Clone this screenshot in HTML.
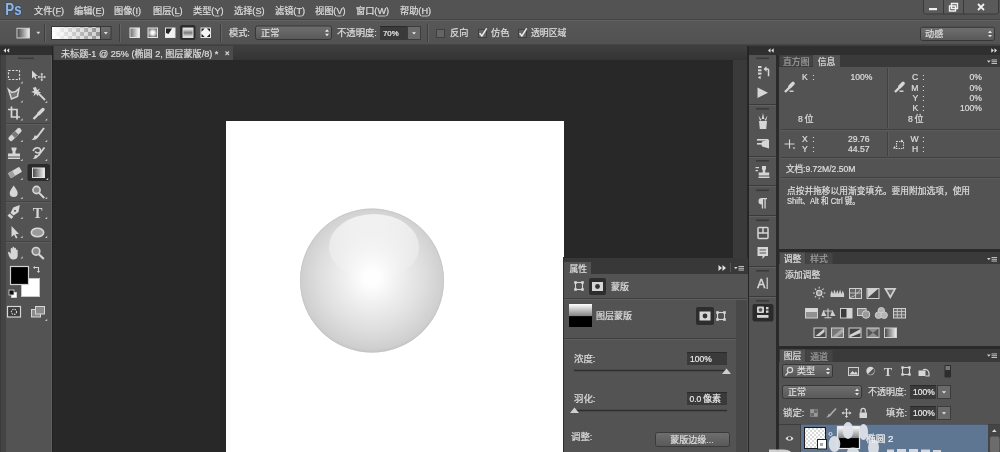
<!DOCTYPE html>
<html lang="zh"><head><meta charset="utf-8"><title>Photoshop</title>
<style>
html,body{margin:0;padding:0;background:#282828;}
body{width:1000px;height:452px;overflow:hidden;position:relative;font-family:"Liberation Sans","Noto Sans CJK SC",sans-serif;}
#app{position:absolute;left:0;top:0;width:1000px;height:452px;overflow:hidden;}
#app>div{position:absolute;}
#ov{position:absolute;left:0;top:0;will-change:transform;}
#ov text{font-family:"Liberation Sans","Noto Sans CJK SC",sans-serif;}
#ov text.serif{font-family:"Liberation Serif","Noto Serif CJK SC",serif;}
</style></head><body>
<div id="app">
<div style="left:0px;top:0px;width:1000px;height:20px;background:#535353;"></div>
<div style="left:0px;top:19px;width:1000px;height:1px;background:#444;"></div>
<div style="left:0px;top:20px;width:1000px;height:1px;background:#626262;"></div>
<div style="left:0px;top:21px;width:1000px;height:23px;background:linear-gradient(#575757,#525252);"></div>
<div style="left:0px;top:44px;width:1000px;height:2px;background:linear-gradient(#4a4a4a,#3a3a3a);"></div>
<div style="left:0px;top:46px;width:1000px;height:14px;background:linear-gradient(#3f3f3f,#343434);"></div>
<div style="left:0px;top:60px;width:1000px;height:392px;background:#282828;"></div>
<div style="left:0px;top:46px;width:52px;height:9px;background:#2f2f2f;"></div>
<div style="left:0px;top:55px;width:52px;height:397px;background:#535353;"></div>
<div style="left:0px;top:55px;width:1px;height:397px;background:#3a3a3a;"></div>
<div style="left:1px;top:55px;width:5px;height:397px;background:#444444;"></div>
<div style="left:51px;top:55px;width:1px;height:397px;background:#5e5e5e;"></div>
<div style="left:52px;top:46px;width:1px;height:406px;background:#222;"></div>
<div style="left:54px;top:46px;width:179px;height:14px;background:#4b4b4b;"></div>
<div style="left:226px;top:121px;width:338px;height:331px;background:#ffffff;"></div>
<div style="left:733px;top:60px;width:15px;height:200px;background:#3a3a3a;"></div>
<div style="left:747px;top:46px;width:2px;height:406px;background:#252525;"></div>
<div style="left:749px;top:46px;width:251px;height:9px;background:#2f2f2f;"></div>
<div style="left:749px;top:55px;width:27px;height:397px;background:#535353;"></div>
<div style="left:776px;top:55px;width:3px;height:397px;background:#2a2a2a;"></div>
<div style="left:779px;top:55px;width:221px;height:12px;background:#3a3a3a;"></div>
<div style="left:779px;top:66.5px;width:221px;height:182px;background:#535353;"></div>
<div style="left:779px;top:248.5px;width:221px;height:3.5px;background:#2a2a2a;"></div>
<div style="left:779px;top:252px;width:221px;height:12px;background:#3a3a3a;"></div>
<div style="left:779px;top:264px;width:221px;height:81.5px;background:#535353;"></div>
<div style="left:779px;top:345.5px;width:221px;height:3.5px;background:#2a2a2a;"></div>
<div style="left:779px;top:349px;width:221px;height:12.5px;background:#3a3a3a;"></div>
<div style="left:779px;top:361.5px;width:221px;height:90.5px;background:#535353;"></div>
<div style="left:563px;top:257.5px;width:185px;height:16.5px;background:#383838;"></div>
<div style="left:563px;top:274px;width:185px;height:178px;background:#535353;"></div>
<div style="left:563px;top:257px;width:1px;height:195px;background:#2c2c2c;"></div>
<div style="left:736px;top:300px;width:11px;height:152px;background:#484848;"></div>
<svg id="ov" width="1000" height="452" viewBox="0 0 1000 452">
<text x="5.3" y="15" font-size="15.6" font-weight="bold" fill="#8fb5e4" stroke="#2a4668" stroke-width="1.6" stroke-opacity=".55" paint-order="stroke" textLength="16.2" lengthAdjust="spacingAndGlyphs">Ps</text>
<text x="34" y="14.1" font-size="9.2" fill="#dcdcdc" stroke="#dcdcdc" stroke-width=".24">文件(F)</text>
<line x1="55.5096" y1="16" x2="60.588" y2="16" stroke="#dcdcdc" stroke-width="0.8" />
<text x="74" y="14.1" font-size="9.2" fill="#dcdcdc" stroke="#dcdcdc" stroke-width=".24">编辑(E)</text>
<line x1="95.5096" y1="16" x2="100.928" y2="16" stroke="#dcdcdc" stroke-width="0.8" />
<text x="114" y="14.1" font-size="9.2" fill="#dcdcdc" stroke="#dcdcdc" stroke-width=".24">图像(I)</text>
<line x1="135.51" y1="16" x2="138.205" y2="16" stroke="#dcdcdc" stroke-width="0.8" />
<text x="153" y="14.1" font-size="9.2" fill="#dcdcdc" stroke="#dcdcdc" stroke-width=".24">图层(L)</text>
<line x1="174.51" y1="16" x2="179.505" y2="16" stroke="#dcdcdc" stroke-width="0.8" />
<text x="193" y="14.1" font-size="9.2" fill="#dcdcdc" stroke="#dcdcdc" stroke-width=".24">类型(Y)</text>
<line x1="214.51" y1="16" x2="219.395" y2="16" stroke="#dcdcdc" stroke-width="0.8" />
<text x="234" y="14.1" font-size="9.2" fill="#dcdcdc" stroke="#dcdcdc" stroke-width=".24">选择(S)</text>
<line x1="255.51" y1="16" x2="260.993" y2="16" stroke="#dcdcdc" stroke-width="0.8" />
<text x="275" y="14.1" font-size="9.2" fill="#dcdcdc" stroke="#dcdcdc" stroke-width=".24">滤镜(T)</text>
<line x1="296.51" y1="16" x2="302.02" y2="16" stroke="#dcdcdc" stroke-width="0.8" />
<text x="315" y="14.1" font-size="9.2" fill="#dcdcdc" stroke="#dcdcdc" stroke-width=".24">视图(V)</text>
<line x1="336.51" y1="16" x2="341.8" y2="16" stroke="#dcdcdc" stroke-width="0.8" />
<text x="356" y="14.1" font-size="9.2" fill="#dcdcdc" stroke="#dcdcdc" stroke-width=".24">窗口(W)</text>
<line x1="377.51" y1="16" x2="385.587" y2="16" stroke="#dcdcdc" stroke-width="0.8" />
<text x="400" y="14.1" font-size="9.2" fill="#dcdcdc" stroke="#dcdcdc" stroke-width=".24">帮助(H)</text>
<line x1="421.51" y1="16" x2="428.207" y2="16" stroke="#dcdcdc" stroke-width="0.8" />
<rect x="923.5" y="-1" width="75" height="15" fill="#5a5a5a" stroke="#3a3a3a" rx="2"/>
<line x1="943.5" y1="0" x2="943.5" y2="14" stroke="#3a3a3a" stroke-width="1" />
<line x1="963.5" y1="0" x2="963.5" y2="14" stroke="#3a3a3a" stroke-width="1" />
<rect x="929" y="8" width="8" height="2.2" fill="#f0f0f0" />
<path d="M951.5 3.5h6v5h-6z M949.5 6h6v5h-6z" fill="none" stroke="#f0f0f0" stroke-width="1.4"/>
<path d="M978 4l6 6M984 4l-6 6" stroke="#f0f0f0" stroke-width="1.8"/>
<defs><linearGradient id="gbw" x1="0" x2="1"><stop offset="0" stop-color="#444"/><stop offset="1" stop-color="#f4f4f4"/></linearGradient><linearGradient id="gwb" x1="0" x2="1"><stop offset="0" stop-color="#fff"/><stop offset="1" stop-color="#fff" stop-opacity="0"/></linearGradient><linearGradient id="btn" x1="0" x2="0" y1="0" y2="1"><stop offset="0" stop-color="#6f6f6f"/><stop offset="1" stop-color="#585858"/></linearGradient><linearGradient id="gv" x1="0" x2="0" y1="0" y2="1"><stop offset="0" stop-color="#fff"/><stop offset=".5" stop-color="#888"/><stop offset=".55" stop-color="#000"/><stop offset="1" stop-color="#000"/></linearGradient><pattern id="chk" width="8" height="8" patternUnits="userSpaceOnUse"><rect width="8" height="8" fill="#cfcfcf"/><rect width="4" height="4" fill="#8c8c8c"/><rect x="4" y="4" width="4" height="4" fill="#8c8c8c"/></pattern><pattern id="chk2" width="4" height="4" patternUnits="userSpaceOnUse"><rect width="4" height="4" fill="#fff"/><rect width="2" height="2" fill="#d9d9d9"/><rect x="2" y="2" width="2" height="2" fill="#d9d9d9"/></pattern><radialGradient id="sph" cx="0.5" cy="0.48" r="0.52"><stop offset="0" stop-color="#ffffff"/><stop offset="0.12" stop-color="#fdfdfd"/><stop offset="0.35" stop-color="#f0f0f0"/><stop offset="0.7" stop-color="#dedede"/><stop offset="0.95" stop-color="#cfcfcf"/><stop offset="1" stop-color="#c4c4c4"/></radialGradient><linearGradient id="hl" x1="0" x2="0" y1="0" y2="1"><stop offset="0" stop-color="#fff" stop-opacity=".68"/><stop offset=".7" stop-color="#fff" stop-opacity=".25"/><stop offset="1" stop-color="#fff" stop-opacity="0"/></linearGradient></defs>
<rect x="17" y="28.3" width="12.5" height="9.7" fill="url(#gbw)" stroke="#d0d0d0"/>
<path d="M36.3 31.8h4l-2 2.4z" fill="#d8d8d8" />
<line x1="44.5" y1="24" x2="44.5" y2="42" stroke="#3e3e3e" stroke-width="1" />
<line x1="45.5" y1="24" x2="45.5" y2="42" stroke="#636363" stroke-width="1" />
<rect x="51.5" y="26.5" width="49" height="13" fill="url(#chk)" stroke="#383838"/>
<rect x="52" y="27" width="48" height="12" fill="url(#gwb)" />
<rect x="100.5" y="26.5" width="10.5" height="13" fill="url(#btn)" stroke="#383838"/>
<path d="M103.800 32h4l-2 2.400z" fill="#e0e0e0" />
<line x1="119.5" y1="24" x2="119.5" y2="42" stroke="#3e3e3e" stroke-width="1" />
<line x1="120.5" y1="24" x2="120.5" y2="42" stroke="#636363" stroke-width="1" />
<defs><linearGradient id="glin" x1="0" x2="1"><stop offset="0" stop-color="#6a6a6a"/><stop offset="1" stop-color="#fff"/></linearGradient><radialGradient id="grad2"><stop offset="0" stop-color="#fff"/><stop offset=".35" stop-color="#f0f0f0"/><stop offset="1" stop-color="#777"/></radialGradient><linearGradient id="gref" x1="0" x2="0" y1="0" y2="1"><stop offset="0" stop-color="#fff"/><stop offset=".5" stop-color="#7a7a7a"/><stop offset="1" stop-color="#f4f4f4"/></linearGradient></defs>
<rect x="180" y="25" width="15.5" height="15" fill="#2c2c2c" rx="2"/>
<rect x="130" y="28" width="9.5" height="9.5" fill="url(#glin)" stroke="#e4e4e4"/>
<rect x="148" y="28" width="9.5" height="9.5" fill="url(#grad2)" stroke="#e4e4e4"/>
<rect x="165.5" y="28" width="9.5" height="9.5" fill="#f2f2f2" stroke="#e4e4e4"/>
<path d="M166 28.5h6l-3.500 5.500l-2.500-1z" fill="#222" />
<rect x="183" y="28" width="10" height="9.5" fill="url(#gref)" stroke="#d8d8d8"/>
<rect x="201" y="28" width="9.5" height="9.5" fill="#f4f4f4" stroke="#e4e4e4"/>
<path d="M201.500 28.500h3.200l-3.200 3.200z M210 28.500h-3.200l3.200 3.200z M201.500 37h3.200l-3.200-3.200z M210 37h-3.200l3.200-3.200z" fill="#222" />
<line x1="220.5" y1="24" x2="220.5" y2="42" stroke="#3e3e3e" stroke-width="1" />
<line x1="221.5" y1="24" x2="221.5" y2="42" stroke="#636363" stroke-width="1" />
<text x="229" y="36" font-size="9.2" fill="#dcdcdc" stroke="#dcdcdc" stroke-width=".24">模式:</text>
<rect x="255.5" y="26" width="76" height="13.5" fill="url(#btn)" stroke="#363636" rx="2"/>
<text x="261" y="36.25" font-size="9.2" fill="#dcdcdc" stroke="#dcdcdc" stroke-width=".24">正常</text>
<path d="M325 31.75 l2 -2.4 l2 2.4z M325 33.75 l2 2.4 l2 -2.4z" fill="#e6e6e6" />
<text transform="translate(337 36) scale(1.0163 1)" font-size="9.2" fill="#dcdcdc" stroke="#dcdcdc" stroke-width=".24">不透明度:</text>
<rect x="380" y="26" width="27" height="14" fill="#3a3a3a" />
<line x1="380" y1="26.5" x2="407" y2="26.5" stroke="#2a2a2a" stroke-width="1" />
<text x="383" y="36.09" font-size="7.8" fill="#e8e8e8" stroke="#e8e8e8" stroke-width=".22" text-anchor="start" font-weight="normal" >70%</text>
<rect x="407.5" y="26.5" width="13" height="13" fill="#6a6a6a" stroke="#3c3c3c"/>
<path d="M412 32.2 h4 l-2 2.400z" fill="#eee" />
<line x1="427.5" y1="24" x2="427.5" y2="42" stroke="#3e3e3e" stroke-width="1" />
<line x1="428.5" y1="24" x2="428.5" y2="42" stroke="#636363" stroke-width="1" />
<rect x="436.5" y="29.5" width="8" height="8" fill="#646464" stroke="#3f3f3f"/>
<text x="450" y="36" font-size="9.2" fill="#dcdcdc" stroke="#dcdcdc" stroke-width=".24">反向</text>
<rect x="478.5" y="29.5" width="8" height="8" fill="#646464" stroke="#3f3f3f"/>
<path d="M479.6 33.2 l2.3 2.8 l4.8 -7.6" fill="none" stroke="#e8e8e8" stroke-width="1.6"/>
<text x="491" y="36" font-size="9.2" fill="#dcdcdc" stroke="#dcdcdc" stroke-width=".24">仿色</text>
<rect x="518.5" y="29.5" width="8" height="8" fill="#646464" stroke="#3f3f3f"/>
<path d="M519.6 33.2 l2.3 2.8 l4.8 -7.6" fill="none" stroke="#e8e8e8" stroke-width="1.6"/>
<text transform="translate(531 36) scale(0.9652 1)" font-size="9.2" fill="#dcdcdc" stroke="#dcdcdc" stroke-width=".24">透明区域</text>
<rect x="920.5" y="27.3" width="74" height="13.2" fill="url(#btn)" stroke="#363636" rx="2"/>
<text x="925" y="37.4" font-size="9.2" fill="#dcdcdc" stroke="#dcdcdc" stroke-width=".24">动感</text>
<path d="M988 32.9 l2 -2.4 l2 2.4z M988 34.9 l2 2.4 l2 -2.4z" fill="#e6e6e6" />
<path d="M3.5 50.5l2.5-2.3v4.6z M6.7 50.5l2.5-2.3v4.6z" fill="#e0e0e0" />
<rect x="18" y="57.5" width="16" height="1.6" fill="#3c3c3c" />
<line x1="6" y1="123.5" x2="50" y2="123.5" stroke="#434343" stroke-width="1" />
<line x1="6" y1="124.5" x2="50" y2="124.5" stroke="#5d5d5d" stroke-width="1" />
<line x1="6" y1="201.5" x2="50" y2="201.5" stroke="#434343" stroke-width="1" />
<line x1="6" y1="202.5" x2="50" y2="202.5" stroke="#5d5d5d" stroke-width="1" />
<line x1="6" y1="241.5" x2="50" y2="241.5" stroke="#434343" stroke-width="1" />
<line x1="6" y1="242.5" x2="50" y2="242.5" stroke="#5d5d5d" stroke-width="1" />
<rect x="27.5" y="164" width="22.5" height="17" fill="#2b2b2b" rx="2"/>
<rect x="8.5" y="70.5" width="11" height="9" fill="none" stroke="#d6d6d6" stroke-width="1.2" stroke-dasharray="2.2 1.4"/>
<path d="M20.5 83.5 h2.2 v-2.2z" fill="#c8c8c8" />
<path d="M32 70.5v8l2-1.800l1.400 2.800l1.300-.7l-1.400-2.700h2.600z" fill="#d6d6d6" />
<path d="M41.800 73.800v6.400M38.600 77h6.400" stroke="#d6d6d6" stroke-width="1"/>
<path d="M41.800 72.800l1.500 1.800h-3z M41.800 81.200l1.500-1.800h-3z M37.600 77l1.800-1.500v3z M46 77l-1.800-1.500v3z" fill="#d6d6d6" />
<path d="M8.500 89.500l3.500 3l3.500-1l3.500-3l-1.500 8l-6 2.500z" fill="#777" stroke="#d6d6d6" stroke-width="1.500"/>
<path d="M20.5 102.5 h2.2 v-2.2z" fill="#c8c8c8" />
<path d="M36 87l1 3l3-1.500l-1.800 2.800l3 1.500l-3.300.4l.3 3.300l-2.200-2.500l-2.500 2.200l.8-3.200l-3.200-.9l3-1.400l-1.300-3z" fill="#d6d6d6" />
<path d="M38 93l7 7" stroke="#d6d6d6" stroke-width="1.800"/>
<path d="M45 103 h2.200 v-2.200z" fill="#c8c8c8" />
<path d="M11.500 106.500v10.500h8.500M8 109.500h9v10" fill="none" stroke="#d6d6d6" stroke-width="1.700"/>
<path d="M20.5 120.5 h2.2 v-2.2z" fill="#c8c8c8" />
<path d="M33.500 119l6.500-6.500" stroke="#d6d6d6" stroke-width="2.400"/><path d="M39 113.500l4-4" stroke="#d6d6d6" stroke-width="3.400" stroke-linecap="round"/>
<path d="M45 120.5 h2.2 v-2.2z" fill="#c8c8c8" />
<g transform="rotate(-45 15 134.500)"><rect x="7" y="132" width="16" height="5" rx="2" fill="#d6d6d6"/><rect x="12.500" y="132" width="5" height="5" fill="#7a7a7a"/></g>
<path d="M20.5 142 h2.2 v-2.2z" fill="#c8c8c8" />
<path d="M44 128l-6.500 8.500" stroke="#d6d6d6" stroke-width="2"/><path d="M38.500 136c-.5 2.500-2.500 4-7 4c1.500-1 2.500-2 3-4.500z" fill="#d6d6d6"/>
<path d="M45 142 h2.2 v-2.2z" fill="#c8c8c8" />
<path d="M11.500 147.500h5v2l-1 1.500v2.500h4.500v3h-12v-3h4.500v-2.500l-1-1.500z" fill="#d6d6d6" />
<rect x="8" y="157.5" width="12" height="1.5" fill="#d6d6d6" />
<path d="M20.5 161 h2.2 v-2.2z" fill="#c8c8c8" />
<path d="M33 151c1.500-4 7.500-4.500 7.500-.5c0 3-4 3-5.500 1" fill="none" stroke="#d6d6d6" stroke-width="1.500"/><path d="M44.500 147.500l-6.500 8.500" stroke="#d6d6d6" stroke-width="1.800"/><path d="M38.500 155.500c-.5 2.500-2.500 3.500-6 3.500c1.500-1 2-2 2.500-4z" fill="#d6d6d6"/>
<path d="M45 161 h2.2 v-2.2z" fill="#c8c8c8" />
<g transform="rotate(-30 15 172.500)"><rect x="8.500" y="169.500" width="13" height="6" rx="1" fill="#d6d6d6"/><rect x="8.500" y="169.500" width="5" height="6" fill="#a0a0a0"/></g>
<path d="M20.5 180 h2.2 v-2.2z" fill="#c8c8c8" />
<rect x="32.5" y="168" width="12" height="9.5" fill="url(#gbw)" stroke="#e0e0e0"/>
<path d="M46 180 h2.2 v-2.2z" fill="#c8c8c8" />
<path d="M13.700 185.500c1.800 3 4 5 4 7.500a4 4 0 0 1-8 0c0-2.500 2.200-4.500 4-7.500z" fill="#d6d6d6" />
<path d="M20.5 199 h2.2 v-2.2z" fill="#c8c8c8" />
<circle cx="36.500" cy="190" r="3.600" fill="#8a8a8a" stroke="#d6d6d6" stroke-width="1.600"/><path d="M39.200 193l5 5" stroke="#d6d6d6" stroke-width="2"/>
<path d="M45 199 h2.2 v-2.2z" fill="#c8c8c8" />
<g transform="rotate(40 14 212)"><path d="M14 203l3.500 6l-1.500 6h-4l-1.500-6z" fill="#d6d6d6"/><rect x="11.500" y="216" width="5" height="3" fill="#d6d6d6"/><circle cx="14" cy="210.500" r="1" fill="#555"/></g>
<path d="M20.5 219 h2.2 v-2.2z" fill="#c8c8c8" />
<text class="serif" x="32.86" y="218" font-size="14.5" font-weight="bold" fill="#d6d6d6">T</text>
<path d="M45 219 h2.2 v-2.2z" fill="#c8c8c8" />
<path d="M11.500 226v11l2.600-2.300l1.900 3.800l1.500-.8l-1.900-3.700h3.400z" fill="#d6d6d6" />
<path d="M20.5 238 h2.2 v-2.2z" fill="#c8c8c8" />
<ellipse cx="37.500" cy="232.500" rx="6.200" ry="4.200" fill="#9a9a9a" stroke="#d6d6d6" stroke-width="1.600"/>
<path d="M45 238 h2.2 v-2.2z" fill="#c8c8c8" />
<path d="M8.200 253.500c-.6-1.600 .8-2.300 1.600-1l.9 1.300v-4.800c0-1.300 1.700-1.300 1.700 0v-1.200c0-1.300 1.800-1.300 1.800 0v1c0-1.300 1.800-1.300 1.800 0v1.700c0-1.200 1.700-1.200 1.700 0v5c0 2.500-1.500 4-4.300 4c-2.700 0-3.900-1.600-5.200-6z" fill="#d6d6d6" />
<path d="M20.5 258.5 h2.2 v-2.2z" fill="#c8c8c8" />
<circle cx="36" cy="251.300" r="3.800" fill="#8a8a8a" stroke="#d6d6d6" stroke-width="1.600"/><path d="M38.800 254.300l5 4.700" stroke="#d6d6d6" stroke-width="2.200"/>
<rect x="21.5" y="278.5" width="18" height="18" fill="#ffffff" stroke="#c8c8c8"/>
<rect x="10.5" y="266.5" width="18" height="18" fill="#000" stroke="#d0d0d0" stroke-width="1.200"/>
<path d="M34 267.500h4.500v4.500" fill="none" stroke="#d6d6d6" stroke-width="1.100"/>
<path d="M33 267.500l2-1.600v3.200z M38.500 273l-1.600-2h3.200z" fill="#d6d6d6" />
<rect x="11.5" y="292.5" width="5" height="5" fill="#fff" stroke="#ddd" stroke-width=".8"/>
<rect x="9" y="290" width="5" height="5" fill="#111" stroke="#ddd" stroke-width=".8"/>
<rect x="7.500" y="306.500" width="13" height="10.500" fill="#3a3a3a" stroke="#d6d6d6" stroke-width="1.200"/><circle cx="14" cy="311.800" r="2.600" fill="none" stroke="#d6d6d6" stroke-width="1.100" stroke-dasharray="1.500 1"/>
<rect x="31.500" y="309.500" width="9" height="7.500" fill="#8a8a8a" stroke="#d6d6d6"/><rect x="35.500" y="306.500" width="9" height="7.500" fill="#8a8a8a" stroke="#d6d6d6"/>
<path d="M45 321 h2.2 v-2.2z" fill="#c8c8c8" />
<text transform="translate(61 56.72) scale(1.0111 1)" font-size="9" fill="#dadada" stroke="#dadada" stroke-width=".24">未标题-1 @ 25% (椭圆 2, 图层蒙版/8) *</text>
<path d="M225.500 51.500l3.500 3.500M229 51.500l-3.500 3.500" stroke="#d0d0d0" stroke-width="1.100"/>
<circle cx="372" cy="280.600" r="72" fill="url(#sph)"/>
<circle cx="372" cy="280.600" r="71.500" fill="none" stroke="#c4c4c4" stroke-width="1" opacity=".7"/>
<ellipse cx="374" cy="247" rx="45" ry="33" fill="url(#hl)"/>
<path d="M768 50.500l2.500-2.300v4.600z M771.200 50.500l2.500-2.300v4.600z" fill="#e0e0e0" />
<path d="M994.500 48.200l2.500 2.300l-2.500 2.300z M991.300 48.200l2.500 2.300l-2.500 2.300z" fill="#e0e0e0" />
<rect x="756" y="57.5" width="13" height="1.6" fill="#3a3a3a" />
<g fill="#d6d6d6"><rect x="758" y="66" width="3.500" height="2"/><rect x="758" y="69.300" width="3.500" height="2"/><rect x="758" y="72.600" width="3.500" height="2"/><path d="M763.500 69l3-2.800v2h1c1.300 0 1.800 .8 1.800 2v6h-1.500v-5.500c0-.7-.2-1-.9-1h-.4v2z"/><path d="M757.800 77.500l2.800-1.800v3.600z"/></g>
<path d="M757.500 87.500l10.500 5.200l-10.500 5.200z" fill="#d6d6d6" />
<line x1="749" y1="104.5" x2="776" y2="104.5" stroke="#3a3a3a" stroke-width="1" />
<line x1="749" y1="105.5" x2="776" y2="105.5" stroke="#606060" stroke-width="1" />
<rect x="756" y="108" width="13" height="1.6" fill="#3a3a3a" />
<g fill="#d6d6d6"><path d="M759 121h8l-.8 8h-6.400z"/><path d="M763 113l1.300 6h-2.600z M758.500 115.500l3 4.500l-1.500 .8z M767.500 115.500l-3 4.500l1.500 .8z"/></g>
<g fill="#d6d6d6"><rect x="757" y="139" width="11" height="1.600"/><rect x="757" y="143" width="7" height="1.600"/><path d="M764 141l5-1.500v9l-5-1.500c-2 0-2.500-1-2.500-3s.5-3 2.500-3z"/></g>
<line x1="749" y1="156.5" x2="776" y2="156.5" stroke="#3a3a3a" stroke-width="1" />
<line x1="749" y1="157.5" x2="776" y2="157.5" stroke="#606060" stroke-width="1" />
<rect x="756" y="160" width="13" height="1.6" fill="#3a3a3a" />
<g fill="#d6d6d6"><path d="M762 166h4v3l-.8 1.500v2h4v3h-10.500v-3h4v-2l-.8-1.500z"/><rect x="758.500" y="176.500" width="11" height="1.500"/><rect x="755.500" y="167" width="3.500" height="1.200"/><rect x="755.500" y="170" width="2.500" height="1.200"/></g>
<line x1="749" y1="185.5" x2="776" y2="185.5" stroke="#3a3a3a" stroke-width="1" />
<line x1="749" y1="186.5" x2="776" y2="186.5" stroke="#606060" stroke-width="1" />
<rect x="756" y="189.5" width="13" height="1.6" fill="#3a3a3a" />
<g fill="#d6d6d6"><path d="M758.500 201.200a3.300 3.300 0 0 1 3.300-3.300h5.200v1.300h-1.300v9.300h-1.300v-9.300h-1.300v9.300h-1.300v-4a3.300 3.300 0 0 1-3.300-3.300z"/></g>
<line x1="749" y1="215.5" x2="776" y2="215.5" stroke="#3a3a3a" stroke-width="1" />
<line x1="749" y1="216.5" x2="776" y2="216.5" stroke="#606060" stroke-width="1" />
<rect x="756" y="219.5" width="13" height="1.6" fill="#3a3a3a" />
<g fill="none" stroke="#d6d6d6" stroke-width="1.500"><rect x="758" y="227.500" width="10" height="11" rx="1"/><path d="M758 233h10M763 227.500v5.500"/></g>
<g fill="#d6d6d6"><path d="M757.500 247h10.500v9h-3l-2.500 3v-3h-5z"/></g><path d="M759.500 250h6.500M759.500 253h6.500" stroke="#555" stroke-width="1"/>
<line x1="749" y1="266.5" x2="776" y2="266.5" stroke="#3a3a3a" stroke-width="1" />
<line x1="749" y1="267.5" x2="776" y2="267.5" stroke="#606060" stroke-width="1" />
<rect x="756" y="270" width="13" height="1.6" fill="#3a3a3a" />
<text x="757.3" y="288" font-size="12" fill="#d6d6d6" stroke="#d6d6d6" stroke-width=".53">A</text>
<line x1="767.2" y1="277.5" x2="767.2" y2="289" stroke="#d6d6d6" stroke-width="1.2" />
<line x1="749" y1="296.5" x2="776" y2="296.5" stroke="#3a3a3a" stroke-width="1" />
<line x1="749" y1="297.5" x2="776" y2="297.5" stroke="#606060" stroke-width="1" />
<rect x="756" y="300" width="13" height="1.6" fill="#3a3a3a" />
<rect x="752.5" y="304" width="21" height="17.5" fill="#2b2b2b" rx="2"/>
<g fill="#d6d6d6"><rect x="757" y="306.500" width="7" height="6.500" rx="1"/><rect x="766" y="307" width="2.500" height="2.300"/><rect x="766" y="310.500" width="2.500" height="2.300"/><rect x="757" y="315" width="11.500" height="2.800"/></g><circle cx="760.500" cy="309.800" r="1.900" fill="#555"/>
<rect x="780" y="55.5" width="32.5" height="10.500" fill="#444444" />
<text x="783.05" y="64.59" font-size="8.8" fill="#9c9c9c" stroke="#9c9c9c" stroke-width=".23">直方图</text>
<rect x="813" y="55" width="27" height="12.5" fill="#535353" />
<text x="817.7" y="64.59" font-size="8.8" fill="#dcdcdc" stroke="#dcdcdc" stroke-width=".23">信息</text>
<path d="M987 60.5 h3.600l-1.800 2.200z" fill="#d0d0d0" />
<rect x="991.5" y="59.5" width="5.5" height="0.9" fill="#d0d0d0" />
<rect x="991.5" y="61.3" width="5.5" height="0.9" fill="#d0d0d0" />
<rect x="991.5" y="63.1" width="5.5" height="0.9" fill="#d0d0d0" />
<line x1="887.5" y1="68" x2="887.5" y2="128" stroke="#414141" stroke-width="1" />
<line x1="888.5" y1="68" x2="888.5" y2="128" stroke="#5c5c5c" stroke-width="1" />
<line x1="781" y1="129.5" x2="1000" y2="129.5" stroke="#414141" stroke-width="1" />
<line x1="781" y1="130.5" x2="1000" y2="130.5" stroke="#5c5c5c" stroke-width="1" />
<line x1="887.5" y1="132" x2="887.5" y2="156" stroke="#414141" stroke-width="1" />
<line x1="888.5" y1="132" x2="888.5" y2="156" stroke="#5c5c5c" stroke-width="1" />
<line x1="781" y1="157.5" x2="1000" y2="157.5" stroke="#414141" stroke-width="1" />
<line x1="781" y1="158.5" x2="1000" y2="158.5" stroke="#5c5c5c" stroke-width="1" />
<line x1="781" y1="177.5" x2="1000" y2="177.5" stroke="#414141" stroke-width="1" />
<line x1="781" y1="178.5" x2="1000" y2="178.5" stroke="#5c5c5c" stroke-width="1" />
<text x="802" y="80.38" font-size="8.6" fill="#dcdcdc" stroke="#dcdcdc" stroke-width=".22" text-anchor="start" font-weight="normal" >K</text>
<text x="812.3" y="80.38" font-size="8.6" fill="#dcdcdc" stroke="#dcdcdc" stroke-width=".22" text-anchor="start" font-weight="normal" >:</text>
<text x="872.5" y="80.38" font-size="8.6" fill="#dcdcdc" stroke="#dcdcdc" stroke-width=".22" text-anchor="end" font-weight="normal" >100%</text>
<g transform="translate(784 81)"><path d="M1 11l5.500-5.500" stroke="#d6d6d6" stroke-width="2.400"/><path d="M6 5.500l3-3" stroke="#d6d6d6" stroke-width="3.600" stroke-linecap="round"/><rect x="5.500" y="9.500" width="4" height="1.400" fill="#d6d6d6"/></g>
<text x="798" y="121.58" font-size="8.6" fill="#dcdcdc" stroke="#dcdcdc" stroke-width=".22" text-anchor="start" font-weight="normal" >8</text>
<text x="804.5" y="121.92" font-size="9" fill="#dcdcdc" stroke="#dcdcdc" stroke-width=".23">位</text>
<g transform="translate(894 81)"><path d="M1 11l5.500-5.500" stroke="#d6d6d6" stroke-width="2.400"/><path d="M6 5.500l3-3" stroke="#d6d6d6" stroke-width="3.600" stroke-linecap="round"/><rect x="5.500" y="9.500" width="4" height="1.400" fill="#d6d6d6"/></g>
<text x="918.3" y="80.38" font-size="8.6" fill="#dcdcdc" stroke="#dcdcdc" stroke-width=".22" text-anchor="end" font-weight="normal" >C</text>
<text x="922.3" y="80.38" font-size="8.6" fill="#dcdcdc" stroke="#dcdcdc" stroke-width=".22" text-anchor="start" font-weight="normal" >:</text>
<text x="982" y="80.38" font-size="8.6" fill="#dcdcdc" stroke="#dcdcdc" stroke-width=".22" text-anchor="end" font-weight="normal" >0%</text>
<text x="918.3" y="90.68" font-size="8.6" fill="#dcdcdc" stroke="#dcdcdc" stroke-width=".22" text-anchor="end" font-weight="normal" >M</text>
<text x="922.3" y="90.68" font-size="8.6" fill="#dcdcdc" stroke="#dcdcdc" stroke-width=".22" text-anchor="start" font-weight="normal" >:</text>
<text x="982" y="90.68" font-size="8.6" fill="#dcdcdc" stroke="#dcdcdc" stroke-width=".22" text-anchor="end" font-weight="normal" >0%</text>
<text x="918.3" y="100.98" font-size="8.6" fill="#dcdcdc" stroke="#dcdcdc" stroke-width=".22" text-anchor="end" font-weight="normal" >Y</text>
<text x="922.3" y="100.98" font-size="8.6" fill="#dcdcdc" stroke="#dcdcdc" stroke-width=".22" text-anchor="start" font-weight="normal" >:</text>
<text x="982" y="100.98" font-size="8.6" fill="#dcdcdc" stroke="#dcdcdc" stroke-width=".22" text-anchor="end" font-weight="normal" >0%</text>
<text x="918.3" y="111.28" font-size="8.6" fill="#dcdcdc" stroke="#dcdcdc" stroke-width=".22" text-anchor="end" font-weight="normal" >K</text>
<text x="922.3" y="111.28" font-size="8.6" fill="#dcdcdc" stroke="#dcdcdc" stroke-width=".22" text-anchor="start" font-weight="normal" >:</text>
<text x="982" y="111.28" font-size="8.6" fill="#dcdcdc" stroke="#dcdcdc" stroke-width=".22" text-anchor="end" font-weight="normal" >100%</text>
<text x="908" y="121.58" font-size="8.6" fill="#dcdcdc" stroke="#dcdcdc" stroke-width=".22" text-anchor="start" font-weight="normal" >8</text>
<text x="914.5" y="121.92" font-size="9" fill="#dcdcdc" stroke="#dcdcdc" stroke-width=".23">位</text>
<path d="M789.500 139.500v9M784.500 144h10" stroke="#d6d6d6" stroke-width="1.100"/>
<path d="M792.500 147.500h3l-1.500 1.800z" fill="#d6d6d6" />
<text x="802" y="141.88" font-size="8.6" fill="#dcdcdc" stroke="#dcdcdc" stroke-width=".22" text-anchor="start" font-weight="normal" >X</text>
<text x="812.3" y="141.88" font-size="8.6" fill="#dcdcdc" stroke="#dcdcdc" stroke-width=".22" text-anchor="start" font-weight="normal" >:</text>
<text x="869.5" y="141.88" font-size="8.6" fill="#dcdcdc" stroke="#dcdcdc" stroke-width=".22" text-anchor="end" font-weight="normal" >29.76</text>
<text x="802" y="151.88" font-size="8.6" fill="#dcdcdc" stroke="#dcdcdc" stroke-width=".22" text-anchor="start" font-weight="normal" >Y</text>
<text x="812.3" y="151.88" font-size="8.6" fill="#dcdcdc" stroke="#dcdcdc" stroke-width=".22" text-anchor="start" font-weight="normal" >:</text>
<text x="869.5" y="151.88" font-size="8.6" fill="#dcdcdc" stroke="#dcdcdc" stroke-width=".22" text-anchor="end" font-weight="normal" >44.57</text>
<rect x="896.500" y="141.500" width="7" height="7" fill="none" stroke="#d6d6d6" stroke-width="1.100" stroke-dasharray="1.500 1"/>
<path d="M901 139.500l2.500 1.500l-2.500 1.500z M894.500 146l1.500 2.500l-3 0z" fill="#d6d6d6" />
<text x="918.5" y="141.88" font-size="8.6" fill="#dcdcdc" stroke="#dcdcdc" stroke-width=".22" text-anchor="end" font-weight="normal" >W</text>
<text x="922.3" y="141.88" font-size="8.6" fill="#dcdcdc" stroke="#dcdcdc" stroke-width=".22" text-anchor="start" font-weight="normal" >:</text>
<text x="918.3" y="151.88" font-size="8.6" fill="#dcdcdc" stroke="#dcdcdc" stroke-width=".22" text-anchor="end" font-weight="normal" >H</text>
<text x="922.3" y="151.88" font-size="8.6" fill="#dcdcdc" stroke="#dcdcdc" stroke-width=".22" text-anchor="start" font-weight="normal" >:</text>
<text transform="translate(786 172.34) scale(0.9727 1)" font-size="8.8" fill="#dcdcdc" stroke="#dcdcdc" stroke-width=".23">文档:9.72M/2.50M</text>
<text x="787" y="193.81" font-size="8.72" fill="#dcdcdc" stroke="#dcdcdc" stroke-width=".23">点按并拖移以用渐变填充。要用附加选项，使用</text>
<text transform="translate(787 204.31) scale(0.8773 1)" font-size="8.72" fill="#dcdcdc" stroke="#dcdcdc" stroke-width=".23">Shift、Alt 和 Ctrl 键。</text>
<rect x="780" y="252.5" width="25" height="12.5" fill="#535353" />
<text x="783.7" y="262.09" font-size="8.8" fill="#dcdcdc" stroke="#dcdcdc" stroke-width=".23">调整</text>
<rect x="805.5" y="253" width="27" height="11" fill="#444444" />
<text x="810.2" y="262.34" font-size="8.8" fill="#9c9c9c" stroke="#9c9c9c" stroke-width=".23">样式</text>
<path d="M987 258 h3.600l-1.800 2.200z" fill="#d0d0d0" />
<rect x="991.5" y="257" width="5.5" height="0.9" fill="#d0d0d0" />
<rect x="991.5" y="258.8" width="5.5" height="0.9" fill="#d0d0d0" />
<rect x="991.5" y="260.6" width="5.5" height="0.9" fill="#d0d0d0" />
<text x="785" y="277.84" font-size="8.8" fill="#dcdcdc" stroke="#dcdcdc" stroke-width=".23">添加调整</text>
<g stroke="#d0d0d0" stroke-width="1.100"><circle cx="819.200" cy="293" r="2.600" fill="#8a8a8a" stroke-width="1.300"/><path d="M819.200 286.800v1.800M819.200 297.400v1.800M813 293h1.800M823.600 293h1.800M814.800 288.600l1.300 1.300M822.300 296.100l1.300 1.300M814.800 297.400l1.300-1.300M822.300 289.900l1.300-1.300"/></g>
<path d="M830.500 297v-3l1.300-3.500l1.300 3.500l1.400-4.500l1.400 4.500l1.400-4l1.400 4l1.400-4.500l1.400 4.500l1.300-3.500l1.300 3.500v3z" fill="#d0d0d0" />
<rect x="849.5" y="288.5" width="12" height="10" fill="#666" stroke="#d0d0d0" stroke-width="1"/>
<path d="M850 297.500c5-1 8-4.500 11-9M850 293h11M855.500 288.500v9.500" fill="none" stroke="#d0d0d0" stroke-width=".8"/>
<rect x="867" y="288.5" width="12" height="10" fill="#4a4a4a" stroke="#d0d0d0" stroke-width="1"/>
<path d="M867.500 298v-9.500h11z" fill="#d0d0d0" />
<path d="M884 288h12.500l-6.200 11z" fill="#d0d0d0" />
<path d="M887 289.800h6.500l-3.200 5.600z" fill="#6a6a6a" />
<rect x="805.5" y="308.5" width="12" height="9.5" fill="#909090" stroke="#d0d0d0" stroke-width="1"/>
<rect x="806" y="308.5" width="11" height="3.5" fill="#d8d8d8" />
<g stroke="#d0d0d0" stroke-width="1.100" fill="none"><path d="M828 308.500v9M823 311h10M824.500 317.700h7"/><path d="M823.500 311.500l-1.500 4h3.600zM832.500 311.500l-1.500 4h3.600z" fill="#d0d0d0"/></g>
<rect x="840.5" y="308.5" width="11.5" height="9.5" fill="#3c3c3c" stroke="#d0d0d0" stroke-width="1"/>
<rect x="846.5" y="308.5" width="5.5" height="9.5" fill="#d4d4d4" />
<rect x="857.5" y="308.5" width="8.5" height="7" fill="#8a8a8a" stroke="#d0d0d0" stroke-width="1"/>
<circle cx="866" cy="314.500" r="3.800" fill="#9a9a9a" stroke="#d0d0d0" stroke-width="1"/>
<g fill="#b4b4b4" stroke="#d0d0d0" stroke-width=".9"><circle cx="881.300" cy="310.800" r="3.300"/><circle cx="878.500" cy="315.200" r="3.300"/><circle cx="884.100" cy="315.200" r="3.300"/></g>
<rect x="893.5" y="308.5" width="12" height="9.5" fill="#6a6a6a" stroke="#d0d0d0" stroke-width="1"/>
<path d="M897.300 308.500v9.500M901.500 308.500v9.500M893.500 311.500h12M893.500 314.800h12" stroke="#d0d0d0" stroke-width=".8"/>
<rect x="814" y="328" width="12" height="9.5" fill="#4a4a4a" stroke="#d0d0d0" stroke-width="1"/>
<path d="M815.500 336l9-7.500v3.500l-5 4z" fill="#d0d0d0" />
<rect x="831.5" y="328" width="12" height="9.5" fill="#777" stroke="#d0d0d0" stroke-width="1"/>
<path d="M832 337l11-9v4.500l-6 4.500z" fill="#a8a8a8" />
<rect x="849" y="328" width="12" height="9.5" fill="#444" stroke="#d0d0d0" stroke-width="1"/>
<path d="M849.500 335l11-6v4l-11 4.500z" fill="#d0d0d0" />
<rect x="867" y="328" width="12" height="9.5" fill="#909090" stroke="#d0d0d0" stroke-width="1"/>
<path d="M867.500 328.500l5.500 4.200l5.500-4.200v8.500l-5.500-4.200l-5.500 4.200z" fill="#555" />
<rect x="884.5" y="328" width="12" height="9.5" fill="url(#gbw)" stroke="#d0d0d0" stroke-width="1"/>
<rect x="780" y="349.5" width="25" height="13" fill="#535353" />
<text x="783.7" y="359.34" font-size="8.8" fill="#dcdcdc" stroke="#dcdcdc" stroke-width=".23">图层</text>
<rect x="805.5" y="350" width="27" height="11.5" fill="#444444" />
<text x="810.2" y="359.59" font-size="8.8" fill="#9c9c9c" stroke="#9c9c9c" stroke-width=".23">通道</text>
<path d="M987 354.5 h3.600l-1.800 2.200z" fill="#d0d0d0" />
<rect x="991.5" y="353.5" width="5.5" height="0.9" fill="#d0d0d0" />
<rect x="991.5" y="355.3" width="5.5" height="0.9" fill="#d0d0d0" />
<rect x="991.5" y="357.1" width="5.5" height="0.9" fill="#d0d0d0" />
<rect x="782.5" y="364.5" width="50" height="13" fill="url(#btn)" stroke="#363636" rx="2"/>
<path d="M826 370 l2 -2.4 l2 2.4z M826 372 l2 2.4 l2 -2.4z" fill="#e6e6e6" />
<circle cx="790" cy="370" r="2.600" fill="none" stroke="#d6d6d6" stroke-width="1.200"/><path d="M788 372.500l-2.500 3" stroke="#d6d6d6" stroke-width="1.300"/>
<text x="797" y="374.42" font-size="9" fill="#dcdcdc" stroke="#dcdcdc" stroke-width=".23">类型</text>
<rect x="848.5" y="367.5" width="10" height="8" fill="#5a5a5a" stroke="#d0d0d0" stroke-width="1"/>
<path d="M849.500 374.500l3-3.500l2 2l1.500-1.500l2 3z" fill="#ddd" />
<circle cx="870.500" cy="371" r="4.200" fill="#d6d6d6"/><path d="M867.800 374a4.200 4.200 0 0 0 5.800-5.800z" fill="#555"/>
<text class="serif" x="883.83" y="375.5" font-size="12.5" font-weight="bold" fill="#d6d6d6">T</text>
<rect x="902.500" y="367.500" width="7" height="7" fill="none" stroke="#d6d6d6" stroke-width="1.100"/>
<rect x="901.3" y="366.3" width="2.4" height="2.4" fill="#d6d6d6" />
<rect x="908.3" y="366.3" width="2.4" height="2.4" fill="#d6d6d6" />
<rect x="901.3" y="373.3" width="2.4" height="2.4" fill="#d6d6d6" />
<rect x="908.3" y="373.3" width="2.4" height="2.4" fill="#d6d6d6" />
<rect x="918.500" y="370.500" width="7" height="5.500" fill="#d6d6d6"/><path d="M923 370a4 4 0 0 1 6 3.500v2.500h-3.500" fill="none" stroke="#d6d6d6" stroke-width="1.200"/>
<rect x="944.5" y="365" width="6.5" height="12.5" fill="#2d2d2d" rx="1"/>
<rect x="945.5" y="366" width="4.5" height="4" fill="#777" />
<rect x="782.5" y="385.5" width="79" height="13" fill="url(#btn)" stroke="#363636" rx="2"/>
<text x="788" y="395.42" font-size="9" fill="#dcdcdc" stroke="#dcdcdc" stroke-width=".23">正常</text>
<path d="M855 391 l2 -2.4 l2 2.4z M855 393 l2 2.4 l2 -2.4z" fill="#e6e6e6" />
<text x="868" y="395.42" font-size="9" fill="#dcdcdc" stroke="#dcdcdc" stroke-width=".23">不透明度:</text>
<rect x="910" y="385" width="26" height="14" fill="#3a3a3a" />
<line x1="910" y1="385.5" x2="936" y2="385.5" stroke="#2a2a2a" stroke-width="1" />
<text x="913" y="395.34" font-size="8.5" fill="#e8e8e8" stroke="#e8e8e8" stroke-width=".22" text-anchor="start" font-weight="normal" >100%</text>
<rect x="937.5" y="385.5" width="13" height="13" fill="#6a6a6a" stroke="#3c3c3c"/>
<path d="M942 391.2 h4 l-2 2.400z" fill="#eee" />
<text transform="translate(783 415.62) scale(1.0489 1)" font-size="9" fill="#dcdcdc" stroke="#dcdcdc" stroke-width=".23">锁定:</text>
<rect x="810.500" y="409.500" width="7" height="7" fill="#6a6a6a" stroke="#888" stroke-width=".8"/><rect x="810.500" y="409.500" width="3.500" height="3.500" fill="#999"/><rect x="814" y="413" width="3.500" height="3.500" fill="#999"/>
<path d="M836 408.500l-5.500 6" stroke="#a8a8a8" stroke-width="1.800"/><path d="M831.500 414c-.5 2.500-2 3.300-5.500 3.500c1.500-.8 2-2 2.500-3.500z" fill="#a8a8a8"/>
<path d="M846.500 409.500v7M843 413h7" stroke="#d6d6d6" stroke-width="1.100"/>
<path d="M846.500 408l1.700 2.100h-3.400z M846.500 418l1.700-2.100h-3.400z M841.500 413l2.100-1.700v3.400z M851.500 413l-2.100-1.700v3.400z" fill="#d6d6d6" />
<rect x="859.500" y="412.500" width="7.500" height="5.500" fill="#d6d6d6"/><path d="M861 412.500v-2a2.200 2.200 0 0 1 4.400 0v2" fill="none" stroke="#d6d6d6" stroke-width="1.300"/>
<text transform="translate(886 415.92) scale(1.0244 1)" font-size="9" fill="#dcdcdc" stroke="#dcdcdc" stroke-width=".23">填充:</text>
<rect x="910" y="406" width="26" height="14" fill="#3a3a3a" />
<line x1="910" y1="406.5" x2="936" y2="406.5" stroke="#2a2a2a" stroke-width="1" />
<text x="913" y="416.34" font-size="8.5" fill="#e8e8e8" stroke="#e8e8e8" stroke-width=".22" text-anchor="start" font-weight="normal" >100%</text>
<rect x="937.5" y="406.5" width="13" height="13" fill="#6a6a6a" stroke="#3c3c3c"/>
<path d="M942 412.2 h4 l-2 2.400z" fill="#eee" />
<line x1="779" y1="424.5" x2="1000" y2="424.5" stroke="#3d3d3d" stroke-width="1" />
<rect x="801" y="424.5" width="187" height="27.5" fill="#5f7693" />
<rect x="779" y="425" width="22" height="27" fill="#535353" />
<line x1="800.5" y1="425" x2="800.5" y2="452" stroke="#414141" stroke-width="1" />
<path d="M785.500 438.500c2-3 6-3 8 0c-2 3-6 3-8 0z" fill="#d6d6d6"/><circle cx="789.500" cy="438.300" r="1.500" fill="#444"/>
<rect x="804.5" y="427.5" width="21" height="21" fill="url(#chk2)" stroke="#1a1a1a"/>
<rect x="817.5" y="439.5" width="9" height="9.5" fill="#fff" stroke="#222" stroke-width="1"/>
<rect x="820" y="443" width="3" height="3" fill="#9ab" />
<circle cx="830.500" cy="434" r="1.600" fill="none" stroke="#dde" stroke-width="1"/>
<rect x="837.5" y="426.5" width="22" height="22" fill="url(#gv)" stroke="#e8e8e8" stroke-width="1.200"/>
<g fill="#e0e4ea" opacity=".93"><ellipse cx="848" cy="430.500" rx="5.300" ry="8.500"/><ellipse cx="863.500" cy="432" rx="4.500" ry="8"/><ellipse cx="834.500" cy="444" rx="5.800" ry="8"/><ellipse cx="853" cy="452" rx="6" ry="4.500"/><ellipse cx="873.500" cy="447.500" rx="5.500" ry="8"/></g>
<g fill="#e8e8e8" opacity=".85"><path d="M769 452v-2.500h14c4 0 7 1 8 2.500z"/><rect x="887" y="449.500" width="7" height="2.500"/><rect x="897" y="449" width="9" height="3"/><rect x="909" y="449" width="9" height="3"/><rect x="921" y="449.500" width="9" height="2.500"/><rect x="933" y="450" width="8" height="2"/></g>
<text transform="translate(866 441.92) scale(1.08 1)" font-size="9" fill="#f0f0f0" stroke="#f0f0f0" stroke-width=".23">椭圆 2</text>
<rect x="988" y="424.5" width="12" height="27.5" fill="#454545" />
<path d="M992 432l2.300-2.800l2.300 2.800z" fill="#ddd" />
<rect x="990" y="436.5" width="9.5" height="16" fill="#6c6c6c" rx="2"/>
<rect x="564" y="262" width="27" height="12" fill="#535353" />
<text x="569.4" y="271.54" font-size="8.8" fill="#dcdcdc" stroke="#dcdcdc" stroke-width=".23">属性</text>
<path d="M718.500 265l3.500 3l-3.500 3z M722.500 265l3.500 3l-3.500 3z" fill="#e0e0e0" />
<line x1="730.5" y1="263" x2="730.5" y2="272" stroke="#555" stroke-width="1" />
<path d="M734 267 h3.600l-1.800 2.200z" fill="#d0d0d0" />
<rect x="738.5" y="266" width="5.5" height="0.9" fill="#d0d0d0" />
<rect x="738.5" y="267.8" width="5.5" height="0.9" fill="#d0d0d0" />
<rect x="738.5" y="269.6" width="5.5" height="0.9" fill="#d0d0d0" />
<rect x="575.5" y="282.5" width="7" height="7" fill="none" stroke="#d6d6d6" stroke-width="1.100"/>
<rect x="574.2" y="281.2" width="2.6" height="2.6" fill="#d6d6d6" />
<rect x="581.2" y="281.2" width="2.6" height="2.6" fill="#d6d6d6" />
<rect x="574.2" y="288.2" width="2.6" height="2.6" fill="#d6d6d6" />
<rect x="581.2" y="288.2" width="2.6" height="2.6" fill="#d6d6d6" />
<rect x="589" y="278" width="17" height="17" fill="#2d2d2d" rx="2"/>
<rect x="592" y="282" width="11" height="9" fill="#d6d6d6" />
<circle cx="597.5" cy="286.5" r="2.400" fill="#333"/>
<text x="611" y="289.92" font-size="9" fill="#dcdcdc" stroke="#dcdcdc" stroke-width=".23">蒙版</text>
<line x1="564" y1="298.5" x2="747" y2="298.5" stroke="#3f3f3f" stroke-width="1" />
<line x1="564" y1="299.5" x2="747" y2="299.5" stroke="#5e5e5e" stroke-width="1" />
<rect x="569" y="304" width="23" height="23" fill="url(#gv)" />
<text x="596" y="318.92" font-size="9" fill="#dcdcdc" stroke="#dcdcdc" stroke-width=".23">图层蒙版</text>
<rect x="696" y="307" width="18" height="18" fill="#2d2d2d" rx="2"/>
<rect x="699.5" y="311.5" width="11" height="9" fill="#d6d6d6" />
<circle cx="705" cy="316" r="2.400" fill="#333"/>
<rect x="717.5" y="312.5" width="7" height="7" fill="none" stroke="#d6d6d6" stroke-width="1.100"/>
<rect x="716.2" y="311.2" width="2.6" height="2.6" fill="#d6d6d6" />
<rect x="723.2" y="311.2" width="2.6" height="2.6" fill="#d6d6d6" />
<rect x="716.2" y="318.2" width="2.6" height="2.6" fill="#d6d6d6" />
<rect x="723.2" y="318.2" width="2.6" height="2.6" fill="#d6d6d6" />
<line x1="564" y1="338.5" x2="736" y2="338.5" stroke="#3f3f3f" stroke-width="1" />
<line x1="564" y1="339.5" x2="736" y2="339.5" stroke="#5e5e5e" stroke-width="1" />
<text transform="translate(574 361.92) scale(1.0489 1)" font-size="9" fill="#dcdcdc" stroke="#dcdcdc" stroke-width=".23">浓度:</text>
<rect x="687" y="352" width="40" height="13" fill="#3a3a3a" />
<line x1="687" y1="352.5" x2="727" y2="352.5" stroke="#2a2a2a" stroke-width="1" />
<text x="690" y="361.84" font-size="8.5" fill="#e8e8e8" stroke="#e8e8e8" stroke-width=".22" text-anchor="start" font-weight="normal" >100%</text>
<line x1="574" y1="370.5" x2="727" y2="370.5" stroke="#2e2e2e" stroke-width="1.5" />
<path d="M726.500 368.500l4.500 5.500h-9z" fill="#cfcfcf" />
<text transform="translate(574 401.92) scale(1.0489 1)" font-size="9" fill="#dcdcdc" stroke="#dcdcdc" stroke-width=".23">羽化:</text>
<rect x="687" y="392" width="40" height="13" fill="#3a3a3a" />
<line x1="687" y1="392.5" x2="727" y2="392.5" stroke="#2a2a2a" stroke-width="1" />
<text x="689.5" y="401.84" font-size="8.5" fill="#e8e8e8" stroke="#e8e8e8" stroke-width=".22" text-anchor="start" font-weight="normal" >0.0</text>
<text x="703" y="401.92" font-size="9" fill="#e8e8e8" stroke="#e8e8e8" stroke-width=".23">像素</text>
<line x1="574" y1="410.5" x2="727" y2="410.5" stroke="#2e2e2e" stroke-width="1.5" />
<path d="M574.500 407.500l4.500 5.500h-9z" fill="#cfcfcf" />
<text transform="translate(571 440.42) scale(1.0489 1)" font-size="9" fill="#dcdcdc" stroke="#dcdcdc" stroke-width=".23">调整:</text>
<rect x="655.5" y="432.5" width="74" height="14" fill="url(#btn)" stroke="#3a3a3a" rx="2"/>
<text x="670.25" y="442.92" font-size="9" fill="#dcdcdc" stroke="#dcdcdc" stroke-width=".23">蒙版边缘...</text>
</svg>
</div>
</body></html>
